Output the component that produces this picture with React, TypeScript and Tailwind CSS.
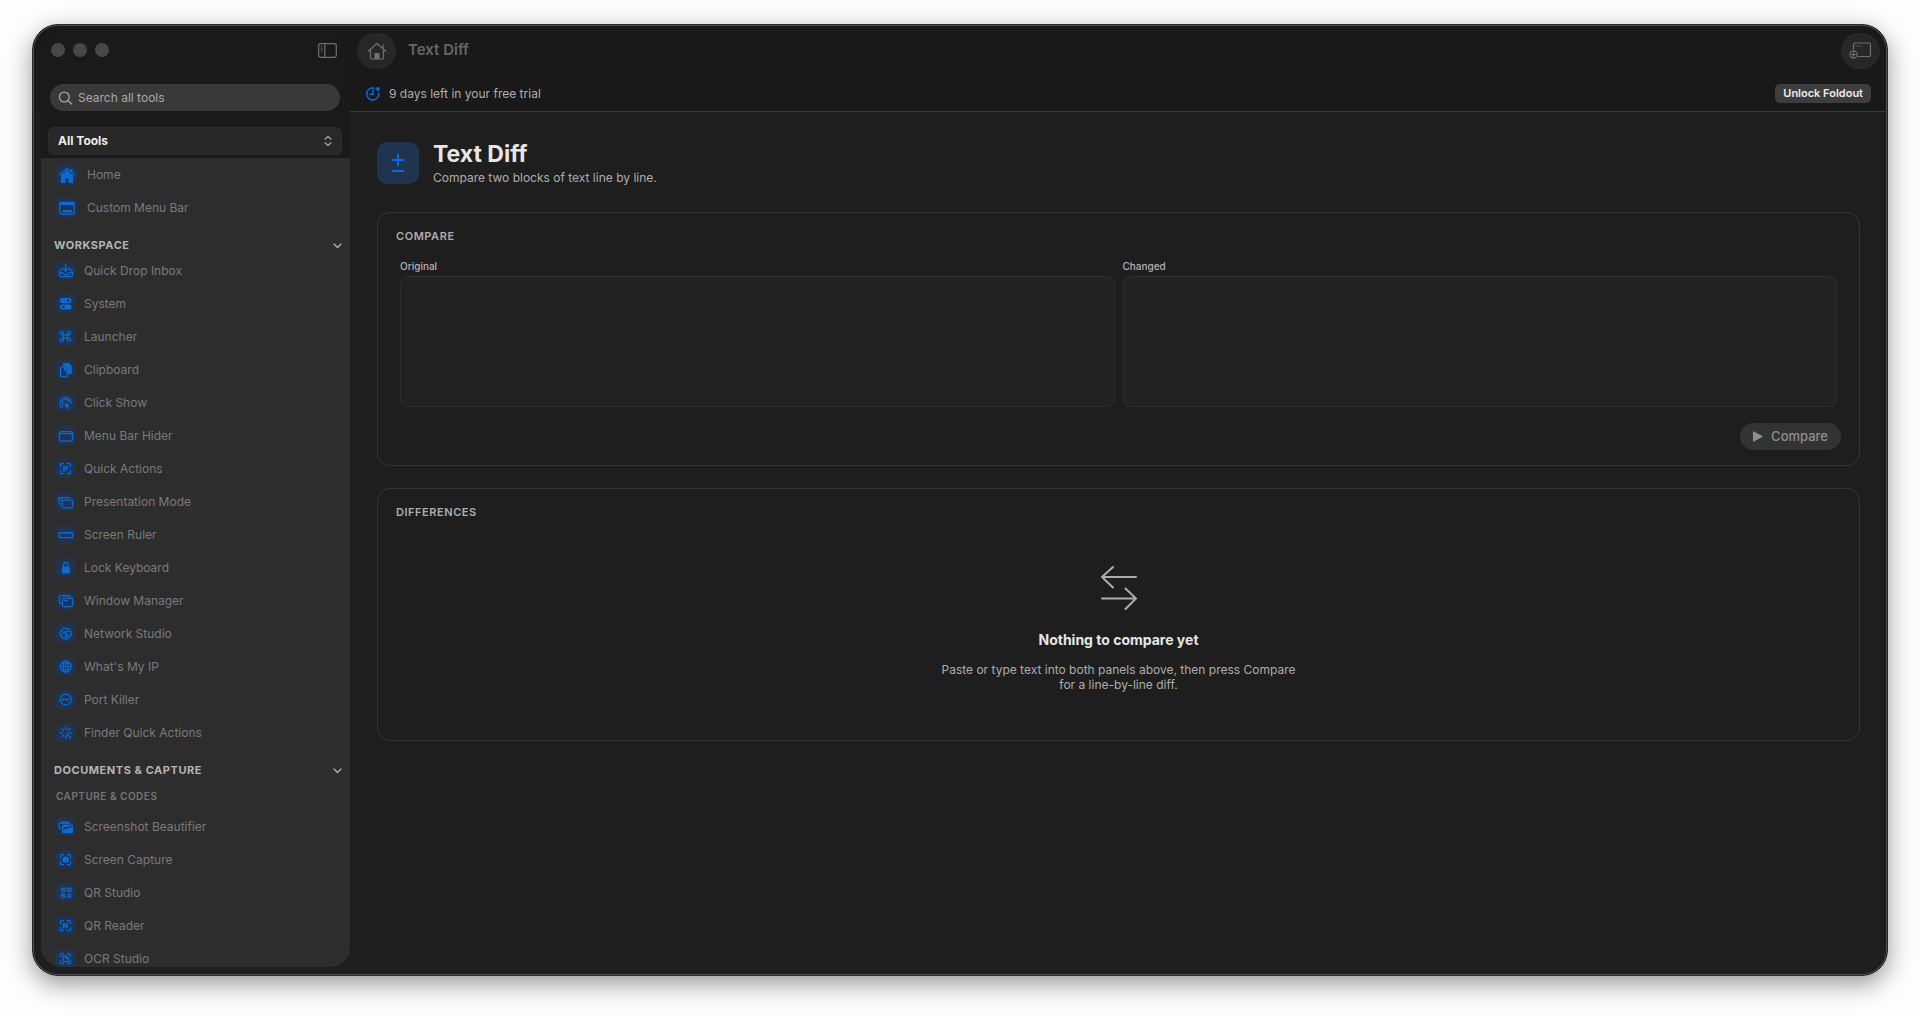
import type { ReactNode } from "react";

type Item = { label: string; icon: ReactNode };

const corners = "M4.5 7.5v-2q0-1 1-1h2M11.5 4.5h2q1 0 1 1v2M14.5 11.5v2q0 1-1 1h-2M7.5 14.5h-2q-1 0-1-1v-2";

const icons = {
  inbox: (
    <>
      <path d="M6 7.5 3.5 11v3.500q0 1 1 1h11q1 0 1-1V11L13.500 7.500" />
      <path d="M3.500 11.500h3q.5 2 3.200 2t3.200-2h3.500M9.600 3.500v6M7 7.500l2.600 2.500 2.600-2.500" />
    </>
  ),
  system: (
    <>
      <rect x="4" y="4" width="11.500" height="5" rx="2" fill="currentColor" stroke="none" />
      <rect x="4" y="10.500" width="11.500" height="5" rx="2" fill="currentColor" stroke="none" />
      <circle cx="12" cy="6.500" r="1.200" fill="#20344f" stroke="none" />
      <circle cx="7.500" cy="13" r="1.200" fill="#20344f" stroke="none" />
    </>
  ),
  command: (
    <path d="M7.500 6.200v6.600a1.600 1.600 0 1 1-1.600-1.600h7.200a1.600 1.600 0 1 1-1.600 1.600V6.200a1.600 1.600 0 1 1 1.600 1.600H5.900a1.600 1.600 0 1 1 1.600-1.600z" />
  ),
  clipboard: (
    <>
      <path d="M8 3h5l2.700 2.800V13q0 1-1 1h-3V9L9 6.200H7V4q0-1 1-1z" fill="currentColor" stroke="none" />
      <path d="M5.500 7H8.500L11.200 10v5.500q0 1-1 1h-4.700q-1 0-1-1V8q0-1 1-1zM8.500 7v3h2.700" />
    </>
  ),
  click: (
    <>
      <path d="M6.500 14.500a5.500 5.500 0 1 1 8.500-4.300M7.700 12a3.100 3.100 0 1 1 4.800-2.800" />
      <path d="M9.300 9.300v6l1.500-1.300 1 2.200 1.200-.6-1-2.100h2z" fill="currentColor" stroke="none" />
    </>
  ),
  menubar: (
    <>
      <rect x="3.500" y="5.500" width="13" height="9.500" rx="2" />
      <path d="M4 7.500h12" />
    </>
  ),
  quick: (
    <>
      <path d={corners} />
      <path d="M7 7.800h5M7 9.700h5M7 11.600h3" />
    </>
  ),
  presentation: (
    <>
      <rect x="6" y="8" width="10.500" height="7.800" rx="1.500" />
      <path d="M4 12h-.5l-1-5q0-1.500 1.500-1.500h1M5 8V6.500q0-1 1-1h6q1.200 0 1.500 1" />
    </>
  ),
  ruler: (
    <>
      <rect x="3.300" y="7.500" width="13.200" height="5" />
      <path d="M6 7.500v1.800M8.300 7.500v1.300M10.600 7.500v2M13 7.500v1.300" strokeWidth=".8" />
    </>
  ),
  lock: (
    <>
      <rect x="5.800" y="8.500" width="8" height="7" rx="1.200" fill="currentColor" stroke="none" />
      <path d="M7.600 8.500V6.600a2.200 2.200 0 0 1 4.400 0v1.900" />
    </>
  ),
  windows: (
    <>
      <path d="M6 12.500H4.500q-1 0-1-1v-6q0-1 1-1h8.500q1 0 1 1V7" />
      <rect x="6.500" y="7" width="10" height="8.500" rx="1.200" />
      <path d="M8.500 9.500h1M10.500 9.500h1" />
    </>
  ),
  network: (
    <>
      <circle cx="9.800" cy="9.500" r="5.500" />
      <path d="M5 7.500l4 1 3-3.500M9 8.500l1.500 3L15 10M10.500 11.500l-1 3.500M5 12l4-3.500 5-1.500M6.500 14l4-2.500 3 2" strokeWidth=".9" />
      <circle cx="9" cy="8.500" r="1.300" fill="currentColor" stroke="none" />
      <circle cx="10.700" cy="11.600" r="1.300" fill="currentColor" stroke="none" />
    </>
  ),
  globe: (
    <>
      <circle cx="9.800" cy="9.500" r="5.500" />
      <ellipse cx="9.800" cy="9.500" rx="2.600" ry="5.500" />
      <path d="M4.300 9.500h11M5.300 6.700h9M5.300 12.300h9M9.800 4v11" strokeWidth=".9" />
    </>
  ),
  port: (
    <>
      <circle cx="9.700" cy="9.500" r="5.500" />
      <path d="M6.500 10.200q1.600-2.200 3.200-.7t3.200-.7" strokeWidth="1.500" />
    </>
  ),
  rays: (
    <path d="M9.800 4v2.500M9.800 13v2.500M4 9.800h2.500M13 9.800h2.500M5.800 5.800l1.700 1.700M13.800 5.800l-1.700 1.700M5.800 13.800l1.700-1.700M10.500 10.500l4 4" strokeWidth="1.300" />
  ),
  beautify: (
    <>
      <path d="M6 9q0-1.500 1.500-1.500h8Q17 7.500 17 9v6q0 1.300-1.500 1.300h-8Q6 16.300 6 15z" fill="currentColor" stroke="none" />
      <path d="M4.500 12h-.5l-1.300-5q0-1 1-1H14M5.500 6V5h6.500v1" />
      <path d="M7.500 12.500l2-2 1.500 1 2.500-2 2 .3" stroke="#20344f" />
    </>
  ),
  capture: (
    <>
      <path d={corners} />
      <rect x="6.300" y="6.800" width="6.500" height="5.600" rx="2" fill="currentColor" stroke="none" />
    </>
  ),
  qr: (
    <>
      <rect x="5.500" y="5" width="3.500" height="3.500" rx=".7" />
      <rect x="11.500" y="5" width="3.500" height="3.500" rx=".7" />
      <rect x="5.500" y="11" width="3.500" height="3.500" rx=".7" />
      <path d="M11.500 11l3.500 3.500M15 11l-3.500 3.500M7 6.700h.6M13 6.700h.6M7 12.700h.6" />
    </>
  ),
  reader: (
    <>
      <path d={corners} />
      <path d="M7.500 7v5M7.500 8h2v2.500h-2M11.500 7v1.500h-1M12 10.500h-1.500v1.500" strokeWidth="1.300" />
    </>
  ),
  ocr: (
    <>
      <path d={corners} />
      <path d="M7.300 6.500h2.500l2.500 2.500v3.700h-5zM9.700 6.500v2.700h2.600" />
    </>
  ),
};

const workspace: Item[] = [
  { label: "Quick Drop Inbox", icon: icons.inbox },
  { label: "System", icon: icons.system },
  { label: "Launcher", icon: icons.command },
  { label: "Clipboard", icon: icons.clipboard },
  { label: "Click Show", icon: icons.click },
  { label: "Menu Bar Hider", icon: icons.menubar },
  { label: "Quick Actions", icon: icons.quick },
  { label: "Presentation Mode", icon: icons.presentation },
  { label: "Screen Ruler", icon: icons.ruler },
  { label: "Lock Keyboard", icon: icons.lock },
  { label: "Window Manager", icon: icons.windows },
  { label: "Network Studio", icon: icons.network },
  { label: "What's My IP", icon: icons.globe },
  { label: "Port Killer", icon: icons.port },
  { label: "Finder Quick Actions", icon: icons.rays },
];

const capture: Item[] = [
  { label: "Screenshot Beautifier", icon: icons.beautify },
  { label: "Screen Capture", icon: icons.capture },
  { label: "QR Studio", icon: icons.qr },
  { label: "QR Reader", icon: icons.reader },
  { label: "OCR Studio", icon: icons.ocr },
];

function ToolLink({ label, icon }: Item) {
  return (
    <li>
      <a href="#" className="flex h-[33px] items-center gap-[9px] pl-[15px] text-xs text-[#7a7a7a]">
        <span className="size-[19px] shrink-0 rounded-[5px] bg-[#20344f] text-[#0a6ad8]">
          <svg viewBox="0 0 19 19" className="size-full" fill="none" stroke="currentColor" strokeWidth="1.250" strokeLinecap="round" strokeLinejoin="round">
            {icon}
          </svg>
        </span>
        {label}
      </a>
    </li>
  );
}

function TopLink({ label, icon }: Item) {
  return (
    <li>
      <a href="#" className="flex h-[33px] items-center gap-2.5 pl-[15px] text-xs text-[#7a7a7a]">
        <span className="size-[21px] shrink-0 rounded-[5px] bg-[#20344f] text-[#0a6ad8]">
          <svg viewBox="0 0 21 21" className="size-full">
            {icon}
          </svg>
        </span>
        {label}
      </a>
    </li>
  );
}

function SectionHeader({ children }: { children: ReactNode }) {
  return (
    <button type="button" className="mt-[13px] flex h-[17px] w-full items-center justify-between pr-2 pl-[13px] text-[11px] font-bold tracking-wider text-[#b4b4b4]">
      {children}
      <svg viewBox="0 0 9 6" className="h-1.5 w-[9px]" fill="none" stroke="currentColor" strokeWidth="1.3" strokeLinecap="round" strokeLinejoin="round">
        <path d="M1 1l3.500 3.500L8 1" />
      </svg>
    </button>
  );
}

function Sidebar() {
  return (
    <aside className="flex w-[309px] shrink-0 flex-col overflow-hidden rounded-[20px] bg-[#2d2d2d]">
      <div className="bg-[#1a1a1a] px-2 pb-[3px]">
        <div className="flex h-[34px] items-center justify-between pr-[5px] pl-0.5">
          <div className="flex gap-2">
            <button type="button" aria-label="Close" className="size-3.5 rounded-full bg-[#474747]" />
            <button type="button" aria-label="Minimize" className="size-3.5 rounded-full bg-[#474747]" />
            <button type="button" aria-label="Zoom" className="size-3.5 rounded-full bg-[#474747]" />
          </div>
          <button type="button" aria-label="Toggle sidebar">
            <svg viewBox="0 0 19 15" className="h-[15px] w-[19px]" fill="none" stroke="#6e6e6e" strokeWidth="1.2">
              <rect x=".7" y=".7" width="17.600" height="13.600" rx="2.200" />
              <path d="M6.800 1v13" />
              <path d="M2.700 3.700h2M2.700 5.800h2M2.700 7.900h2" strokeWidth=".9" />
            </svg>
          </button>
        </div>
        <label className="mt-[17px] mr-0.5 ml-px flex h-[27px] items-center gap-[5px] rounded-full bg-[#393939] pl-2">
          <svg viewBox="0 0 15 14" className="h-3.5 w-[15px]" fill="none" stroke="#a4a4a4" strokeWidth="1.3" strokeLinecap="round">
            <circle cx="6.300" cy="6" r="4.900" />
            <path d="M10 9.700l3.800 3.300" />
          </svg>
          <input type="search" aria-label="Search all tools" placeholder="Search all tools" className="min-w-0 flex-1 bg-transparent text-xs text-[#b0b0b0] outline-none placeholder:text-[#a8a8a8]" />
        </label>
        <div className="relative mt-4 -ml-px">
          <select aria-label="Tool category" className="h-7 w-full appearance-none rounded-md border border-[#2d2d2d] bg-[#282828] px-[9px] text-xs font-bold text-[#ececec]">
            <option>All Tools</option>
          </select>
          <svg viewBox="0 0 8 12" className="pointer-events-none absolute top-2 right-2.5 h-3 w-2" fill="none" stroke="#a8a8a8" strokeWidth="1.200" strokeLinecap="round" strokeLinejoin="round">
            <path d="M1 4.200L4 1.500l3 2.700M1 7.800l3 2.700 3-2.700" />
          </svg>
        </div>
      </div>
      <nav className="min-h-0 flex-1 overflow-hidden">
        <ul>
          <TopLink
            label="Home"
            icon={
              <>
                <path d="M3.500 10.700L11 4.500l7.500 6.200" fill="none" stroke="currentColor" strokeWidth="1.400" strokeLinecap="round" />
                <path d="M14.500 5h2v4l-2-1.700zM5 11.200l6-5 6 5V18q0 1-1 1h-3.500v-4.500h-3V19H6q-1 0-1-1z" fill="currentColor" />
              </>
            }
          />
          <TopLink
            label="Custom Menu Bar"
            icon={
              <>
                <rect x="3.700" y="5.500" width="14.500" height="11.500" rx="2" fill="none" stroke="currentColor" strokeWidth="1.300" />
                <path d="M4 5.500h14v2.500H4zM6.500 13h9.500v2.200H6.500z" fill="currentColor" />
              </>
            }
          />
        </ul>
        <SectionHeader>WORKSPACE</SectionHeader>
        <ul>
          {workspace.map((t) => (
            <ToolLink key={t.label} {...t} />
          ))}
        </ul>
        <SectionHeader>DOCUMENTS &amp; CAPTURE</SectionHeader>
        <h3 className="mt-1 flex h-[27px] items-center pl-[15px] text-[10px] font-semibold tracking-wider text-[#757575]">CAPTURE &amp; CODES</h3>
        <ul>
          {capture.map((t) => (
            <ToolLink key={t.label} {...t} />
          ))}
        </ul>
      </nav>
    </aside>
  );
}

function Panel({ id, label }: { id: string; label: string }) {
  return (
    <div className="flex flex-1 flex-col">
      <label htmlFor={id} className="h-[18px] text-[10px] leading-4 font-medium text-[#b4b4b4]">
        {label}
      </label>
      <textarea id={id} className="h-[131px] w-full resize-none rounded-lg border border-[#2e2e2e] bg-[#222] p-2 text-xs text-[#ddd] outline-none" />
    </div>
  );
}

export default function App() {
  return (
    <div className="h-screen bg-[#fdfdfd] px-8 pt-6 pb-10 font-[Inter,sans-serif]">
      <div className="flex h-full overflow-hidden rounded-[26px] border border-[#2a2a2a] bg-[linear-gradient(to_bottom,#191919_87px,#1e1e1e_87px)] py-2 pl-2 shadow-[inset_0_0_0_1px_#4c4c4c,0_8px_24px_rgba(0,0,0,0.4)]">
        <Sidebar />
        <main className="-mt-2 flex min-w-0 flex-1 flex-col">
          <header className="flex h-[51px] shrink-0 items-center px-[7px]">
            <button type="button" aria-label="Home" className="flex h-9 w-[39px] items-center justify-center rounded-full bg-[#272727]">
              <svg viewBox="0 0 20 18" className="h-[18px] w-5" fill="none" stroke="#707070" strokeWidth="1.200" strokeLinecap="round" strokeLinejoin="round">
                <path d="M1.200 9.200L10 1.500l8.800 7.700M3.500 7.800v8.200q0 1 1 1h11q1 0 1-1V7.800M16.200 6.500V2.800" />
                <path d="M8 17v-5.500h4V17" fill="#707070" />
              </svg>
            </button>
            <span className="ml-3 text-[15px] font-semibold text-[#666]">Text Diff</span>
            <button type="button" aria-label="New window" className="ml-auto flex h-9 w-[39px] items-center justify-center rounded-full bg-[#272727]">
              <svg viewBox="0 0 23 17" className="h-[17px] w-[23px]" fill="none" stroke="#707070" strokeWidth="1.200" strokeLinecap="round">
                <path d="M4.500 7V3q0-2 2-2h13q2 0 2 2v9.500q0 2-2 2h-10" />
                <path d="M7 4h.5M9.300 4h.5M11.600 4h.5" />
                <circle cx="4.500" cy="12.500" r="3.600" />
                <path d="M4.500 10.700v3.600M2.700 12.500h3.600" />
              </svg>
            </button>
          </header>
          <div className="flex h-9 shrink-0 items-center border-b border-[#3a3a3a] px-4">
            <svg viewBox="0 0 14 14" className="size-3.5" fill="none" stroke="#0a6ad8" strokeWidth="1.500" strokeLinecap="round">
              <path d="M8.500 1.200A6 6 0 1 0 12.700 6M7 3.500v3.700H4" />
              <circle cx="12" cy="2" r="1.900" fill="#0a6ad8" stroke="none" />
            </svg>
            <span className="ml-[9px] text-xs text-[#adadad]">9 days left in your free trial</span>
            <button type="button" className="ml-auto h-[19px] rounded-[5px] bg-[#3d3d3d] px-2 text-[11px] font-semibold text-[#ececec]">
              Unlock Foldout
            </button>
          </div>
          <div className="px-[27px] pt-[30px]">
            <div className="flex h-[42px] items-center gap-3.5">
              <div className="flex size-[42px] items-center justify-center rounded-[10px] bg-[#20344f]">
                <svg viewBox="0 0 14 20" className="h-5 w-3.5" stroke="#0a6ad8" strokeWidth="2">
                  <path d="M7 1v12M1 7h12M1 18h12" />
                </svg>
              </div>
              <div>
                <h1 className="text-[23px] leading-7 font-bold text-[#e6e6e6]">Text Diff</h1>
                <p className="mt-0.5 text-xs leading-4 text-[#adadad]">Compare two blocks of text line by line.</p>
              </div>
            </div>
            <section className="mt-7 rounded-[13px] border border-[#353535] px-[18px] py-[15px]">
              <h2 className="text-[11px] leading-4 font-semibold tracking-wider text-[#adadad]">COMPARE</h2>
              <div className="mt-3.5 flex gap-2 px-1">
                <Panel id="original" label="Original" />
                <Panel id="changed" label="Changed" />
              </div>
              <div className="mt-4 flex justify-end">
                <button type="button" className="flex h-[27px] items-center gap-2 rounded-full bg-[#333] px-[13px] text-[13px] font-medium text-[#8e8e8e]">
                  <svg viewBox="0 0 10 11" className="h-[11px] w-2.5" fill="currentColor">
                    <path d="M0 .8Q0 0 .8.400L9.300 5q.7.500 0 1L.8 10.600Q0 11 0 10.200z" />
                  </svg>
                  Compare
                </button>
              </div>
            </section>
            <section className="mt-[22px] rounded-[13px] border border-[#353535] px-[18px] pt-[15px] pb-12">
              <h2 className="text-[11px] leading-4 font-semibold tracking-wider text-[#adadad]">DIFFERENCES</h2>
              <div className="mt-[46px] flex flex-col items-center text-center">
                <svg viewBox="0 0 36 44" className="h-11 w-9" fill="none" stroke="#adadad" strokeWidth="2" strokeLinecap="round" strokeLinejoin="round">
                  <path d="M35 11H1M12 1L1 11l11 10.500M1 32.500h34M24.500 22.500l10.500 10L24.500 43" />
                </svg>
                <h3 className="mt-5 text-sm leading-5 font-bold text-[#e6e6e6]">Nothing to compare yet</h3>
                <p className="mt-3 max-w-[360px] text-xs leading-[15px] text-[#adadad]">
                  Paste or type text into both panels above, then press Compare for a line-by-line diff.
                </p>
              </div>
            </section>
          </div>
        </main>
      </div>
    </div>
  );
}
